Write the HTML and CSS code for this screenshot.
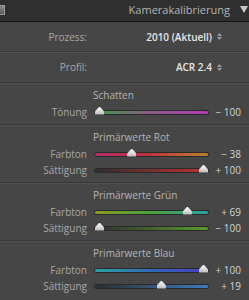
FILE: index.html
```html
<!DOCTYPE html>
<html>
	<head>
		<meta charset="utf-8">
		<link rel="stylesheet" href="styles.css">
	</head>
	<body>
		<div class="head">
			<div class="grip"></div>
			<span class="title">Kamerakalibrierung</span>
			<span class="toggle"></span>
		</div>
		<div class="pick">
			<span class="label">Prozess:</span>
			<span class="value">2010 (Aktuell) <svg width="5" height="7" viewBox="0 0 5 7"><path d="M0 3 L2.5 0 L5 3 Z M0 4 L2.5 7 L5 4 Z" fill="#9a9a9a"/></svg></span>
		</div>
		<div class="pick">
			<span class="label">Profil:</span>
			<span class="value">ACR 2.4 <svg width="5" height="7" viewBox="0 0 5 7"><path d="M0 3 L2.5 0 L5 3 Z M0 4 L2.5 7 L5 4 Z" fill="#9a9a9a"/></svg></span>
		</div>
		<div class="section">
			<div class="heading">Schatten</div>
			<div class="slider">
				<span class="label">Tönung</span>
				<div class="track tint"><i style="--p:0"></i></div>
				<span class="num">− 100</span>
			</div>
		</div>
		<div class="section">
			<div class="heading">Primärwerte Rot</div>
			<div class="slider">
				<span class="label">Farbton</span>
				<div class="track red-hue"><i style="--p:0.31"></i></div>
				<span class="num">− 38</span>
			</div>
			<div class="slider">
				<span class="label">Sättigung</span>
				<div class="track red-sat"><i style="--p:1"></i></div>
				<span class="num">+ 100</span>
			</div>
		</div>
		<div class="section">
			<div class="heading">Primärwerte Grün</div>
			<div class="slider">
				<span class="label">Farbton</span>
				<div class="track green-hue"><i style="--p:0.845"></i></div>
				<span class="num">+ 69</span>
			</div>
			<div class="slider">
				<span class="label">Sättigung</span>
				<div class="track green-sat"><i style="--p:0"></i></div>
				<span class="num">− 100</span>
			</div>
		</div>
		<div class="section">
			<div class="heading">Primärwerte Blau</div>
			<div class="slider">
				<span class="label">Farbton</span>
				<div class="track blue-hue"><i style="--p:1"></i></div>
				<span class="num">+ 100</span>
			</div>
			<div class="slider">
				<span class="label">Sättigung</span>
				<div class="track blue-sat"><i style="--p:0.595"></i></div>
				<span class="num">+ 19</span>
			</div>
		</div>
	</body>
</html>
```
FILE: styles.css
```css
html {
	background: #464646;
	overflow: hidden;
}
body {
	margin: 0;
	height: 300px;
	overflow: hidden;
	background: #464646;
	font-family: "Open Sans", "DejaVu Sans", sans-serif;
	font-size: 10px;
	color: #a6a6a6;
}
.head {
	height: 21px;
	background: #2f2f2f;
	border-bottom: solid 1px #141414;
	display: flex;
	align-items: center;
}
.grip {
	width: 5px;
	height: 10px;
	margin-bottom: 2px;
	background: linear-gradient(#8a8a8a, #5a5a5a);
	border: solid 1px #9a9a9a;
	border-left: none;
	box-sizing: border-box;
}
.title {
	margin-left: auto;
	font-size: 11px;
	color: #b4b4b4;
	margin-bottom: 2px;
}
.toggle {
	width: 0; height: 0;
	margin: 0 1px 2px 10px;
	border-left: solid 4px transparent;
	border-right: solid 4px transparent;
	border-top: solid 7px #c8c8c8;
}
.pick {
	height: 29px;
	display: flex;
	align-items: center;
	border-bottom: solid 1px #383838;
	box-shadow: 0 1px 0 #505050;
}
.pick + .pick {
	height: 30px;
}
.pick .label {
	width: 87px;
	text-align: right;
}
.pick .value {
	margin: 0 27px 0 auto;
	font-weight: 600;
	color: #e6e6e6;
	display: flex;
	align-items: center;
	gap: 5px;
}
.section {
	padding: 5px 0 4px;
	border-bottom: solid 1px #383838;
	box-shadow: 0 1px 0 #505050;
}
.section:last-child {
	border-bottom: none;
	box-shadow: none;
}
.heading {
	line-height: 14px;
	margin: 0 0 2px 93px;
	color: #b4b4b4;
}
.slider {
	height: 16px;
	display: grid;
	grid-template-columns: 87px 124px 30px;
	align-items: center;
}
.slider .label {
	text-align: right;
}
.slider .num {
	text-align: right;
	color: #d2d2d2;
}
.track {
	position: relative;
	margin-left: 8px;
	width: 113px;
	height: 3px;
	border-radius: 2px;
	box-shadow: 0 0 0 1px #2a2a2a;
}
.track::before {
	content: "";
	position: absolute;
	left: 4px; right: 4px;
	top: -5px;
	height: 1px;
	background: repeating-linear-gradient(90deg, #3c3c3c 0 1px, transparent 1px 10.5px);
}
.track i {
	position: absolute;
	top: -4px;
	left: calc(var(--p) * 104px);
	width: 9px;
	height: 8px;
	background: linear-gradient(#ffffff, #b8b8b8);
	clip-path: polygon(50% 0, 100% 60%, 100% 100%, 0 100%, 0 60%);
}
.tint { background: linear-gradient(90deg, #3f9a45, #8a5a8a 50%, #b23cb2); }
.red-hue { background: linear-gradient(90deg, #b0306a, #c03040 45%, #b8802c); }
.red-sat { background: linear-gradient(90deg, #2e2e2e, #c23030); }
.green-hue { background: linear-gradient(90deg, #8c9a20, #4aa040 50%, #2aa3a0); }
.green-sat { background: linear-gradient(90deg, #2e2e2e, #5a9a30); }
.blue-hue { background: linear-gradient(90deg, #2aa3a0, #3068b8 50%, #4a3cc0); }
.blue-sat { background: linear-gradient(90deg, #2e2e2e, #3a7cc0); }
```
